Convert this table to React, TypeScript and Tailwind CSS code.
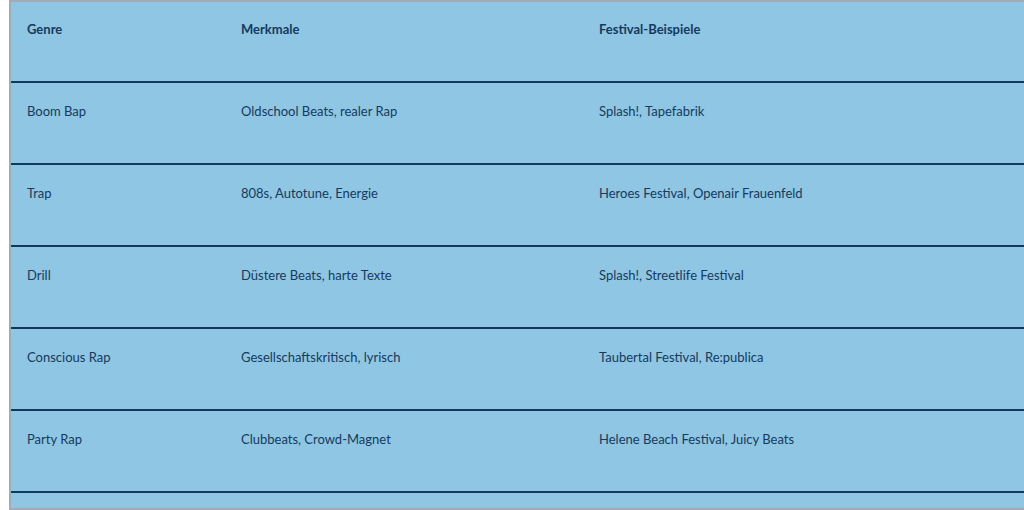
const rows = [
  { genre: "Boom Bap", merkmale: "Oldschool Beats, realer Rap", festivals: "Splash!, Tapefabrik" },
  { genre: "Trap", merkmale: "808s, Autotune, Energie", festivals: "Heroes Festival, Openair Frauenfeld" },
  { genre: "Drill", merkmale: "Düstere Beats, harte Texte", festivals: "Splash!, Streetlife Festival" },
  { genre: "Conscious Rap", merkmale: "Gesellschaftskritisch, lyrisch", festivals: "Taubertal Festival, Re:publica" },
  { genre: "Party Rap", merkmale: "Clubbeats, Crowd-Magnet", festivals: "Helene Beach Festival, Juicy Beats" },
];

function Row({ cells, head }: { cells: string[]; head?: boolean }) {
  const cell = head ? "px-4 pt-[17px] font-bold" : "px-4 pt-[18px]";
  return (
    <div className={`flex shrink-0 border-b-2 border-[#12385e] ${head ? "h-[81px]" : "h-[82px]"}`}>
      <div className={`w-[214px] shrink-0 ${cell}`}>{cells[0]}</div>
      <div className={`w-[358px] shrink-0 ${cell}`}>{cells[1]}</div>
      <div className={`flex-1 ${cell}`}>{cells[2]}</div>
    </div>
  );
}

export default function App() {
  return (
    <div className="h-[510px] w-[1024px] overflow-hidden bg-white pl-[9px]">
      <div
        className="flex h-full flex-col overflow-hidden border-y-2 border-l-2 border-[#a3aab0] bg-[#8ec6e3] text-[13px] leading-5 text-[#173a5e]"
        style={{ fontFamily: "Lato, 'Noto Sans', sans-serif" }}
      >
        <Row head cells={["Genre", "Merkmale", "Festival-Beispiele"]} />
        {rows.map((r) => (
          <Row key={r.genre} cells={[r.genre, r.merkmale, r.festivals]} />
        ))}
        <Row cells={["", "", ""]} />
      </div>
    </div>
  );
}
